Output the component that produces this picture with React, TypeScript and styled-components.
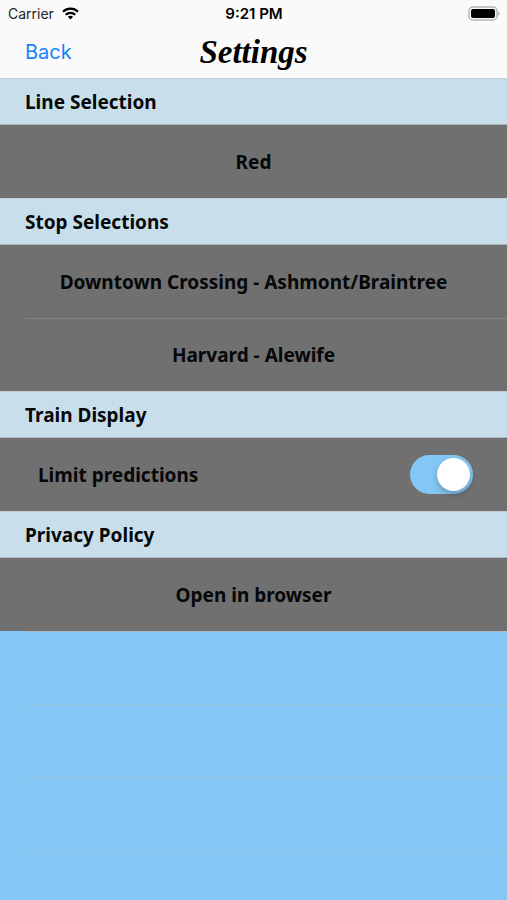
import React, { useState } from "react";
import styled, { createGlobalStyle } from "styled-components";

const GlobalStyle = createGlobalStyle`
  * { box-sizing: border-box; }
  body { margin: 0; background: #84c7f5; }
`;

const Screen = styled.div`
  min-height: 100vh;
  display: flex;
  flex-direction: column;
  background: #84c7f5;
  color: #050708;
  font-family: "Noto Sans", sans-serif;
  font-size: 19px;
  font-weight: 700;
  line-height: 24px;
`;

const Header = styled.header`
  background: #fafafa;
  color: #000;
`;

const StatusBar = styled.div`
  height: 27px;
  padding: 0 7px 0 8px;
  display: grid;
  grid-template-columns: 1fr auto 1fr;
  align-items: center;
  font-family: Inter, sans-serif;
  font-size: 14px;
  font-weight: 400;
  line-height: 18px;
`;

const Carrier = styled.div`
  display: flex;
  align-items: center;
  gap: 8px;
  color: #222;
`;

const Clock = styled.time`
  font-size: 15px;
  font-weight: 600;
`;

const Battery = styled.svg`
  justify-self: end;
`;

const NavBar = styled.nav`
  height: 51px;
  padding: 0 25px 2px;
  display: grid;
  grid-template-columns: 1fr auto 1fr;
  align-items: center;
`;

const BackButton = styled.button`
  justify-self: start;
  padding: 0;
  border: 0;
  background: none;
  color: #1683fb;
  font-family: Inter, sans-serif;
  font-size: 20px;
  line-height: 24px;
  cursor: pointer;
`;

const Title = styled.h1`
  margin: 0;
  font-family: "Liberation Serif", serif;
  font-size: 33px;
  font-style: italic;
  font-weight: 700;
  line-height: 36px;
`;

const SectionHeading = styled.h2`
  margin: 0;
  height: 47px;
  padding: 0 25px;
  display: flex;
  align-items: center;
  border-top: 1px solid #c3d0d3;
  border-bottom: 1px solid #a9b8c0;
  background: #c8dfeb;
  font-size: 19px;
  font-weight: 700;
  line-height: 24px;
`;

const Rows = styled.div`
  background: #707070;
`;

const RowButton = styled.button`
  width: 100%;
  height: 73px;
  padding: 0 25px;
  display: block;
  border: 0;
  background: none;
  color: inherit;
  font: inherit;
  text-align: center;
  cursor: pointer;
`;

const Separator = styled.hr`
  height: 1px;
  margin: 0 0 -1px 25px;
  border: 0;
  background: #848484;
`;

const SwitchRow = styled.label`
  height: 73px;
  padding: 0 34px 0 38px;
  display: flex;
  align-items: center;
  justify-content: space-between;
  cursor: pointer;
`;

const Switch = styled.input`
  appearance: none;
  width: 63px;
  height: 39px;
  margin: 0;
  padding: 3px;
  display: flex;
  border-radius: 20px;
  background: #a5a5a5;
  cursor: pointer;

  &::before {
    content: "";
    width: 33px;
    height: 33px;
    border-radius: 50%;
    background: #fff;
    box-shadow: 0 3px 6px rgba(0, 0, 0, 0.25);
  }
  &:checked {
    justify-content: flex-end;
    background: #84c7f5;
  }
`;

const EmptyRow = styled.div<{ $first: boolean }>`
  height: 73px;
  margin-left: 25px;
  border-top: 1px solid ${(p) => (p.$first ? "#a9bac5" : "#97c6e1")};
  &:last-child { height: auto; flex: 1; }
`;

type Item = { label: string; toggle?: boolean };
const sections: { title: string; items: Item[] }[] = [
  { title: "Line Selection", items: [{ label: "Red" }] },
  {
    title: "Stop Selections",
    items: [{ label: "Downtown Crossing - Ashmont/Braintree" }, { label: "Harvard - Alewife" }],
  },
  { title: "Train Display", items: [{ label: "Limit predictions", toggle: true }] },
  { title: "Privacy Policy", items: [{ label: "Open in browser" }] },
];
const emptyRows = [0, 1, 2, 3];

function WifiIcon() {
  return (
    <svg width="17" height="13" viewBox="0 0 17 13" fill="none" stroke="#000" strokeWidth="2.2" aria-hidden="true">
      <path d="M1 4.8C5.2.6 11.8.6 16 4.8" />
      <path d="M3.7 7.8c2.7-2.7 6.9-2.7 9.6 0" />
      <path d="M8.5 12.4 5.9 9.7c1.5-1.4 3.7-1.4 5.2 0z" fill="#000" stroke="none" />
    </svg>
  );
}

function BatteryIcon() {
  return (
    <Battery width="32" height="15" viewBox="0 0 32 15" aria-hidden="true">
      <rect x="1" y="1" width="28" height="13" rx="4" fill="#fafafa" stroke="#b5b5b5" strokeWidth="1.5" />
      <rect x="3" y="3" width="24" height="9" rx="2" fill="#000" />
      <path d="M30.3 5.5c1.6.5 1.6 3.5 0 4z" fill="#999" />
    </Battery>
  );
}

export default function App() {
  const [limited, setLimited] = useState(true);
  return (
    <Screen>
      <GlobalStyle />
      <Header>
        <StatusBar>
          <Carrier>Carrier <WifiIcon /></Carrier>
          <Clock>9:21 PM</Clock>
          <BatteryIcon />
        </StatusBar>
        <NavBar>
          <BackButton type="button">Back</BackButton>
          <Title>Settings</Title>
        </NavBar>
      </Header>
      {sections.map((section) => (
        <section key={section.title}>
          <SectionHeading>{section.title}</SectionHeading>
          <Rows>
            {section.items.map((item, i) => (
              <React.Fragment key={item.label}>
                {i > 0 && <Separator />}
                {item.toggle ? (
                  <SwitchRow>
                    {item.label}
                    <Switch
                      type="checkbox"
                      role="switch"
                      checked={limited}
                      onChange={(e) => setLimited(e.target.checked)}
                    />
                  </SwitchRow>
                ) : (
                  <RowButton type="button">{item.label}</RowButton>
                )}
              </React.Fragment>
            ))}
          </Rows>
        </section>
      ))}
      {emptyRows.map((row) => (
        <EmptyRow key={row} $first={row === 0} />
      ))}
    </Screen>
  );
}
